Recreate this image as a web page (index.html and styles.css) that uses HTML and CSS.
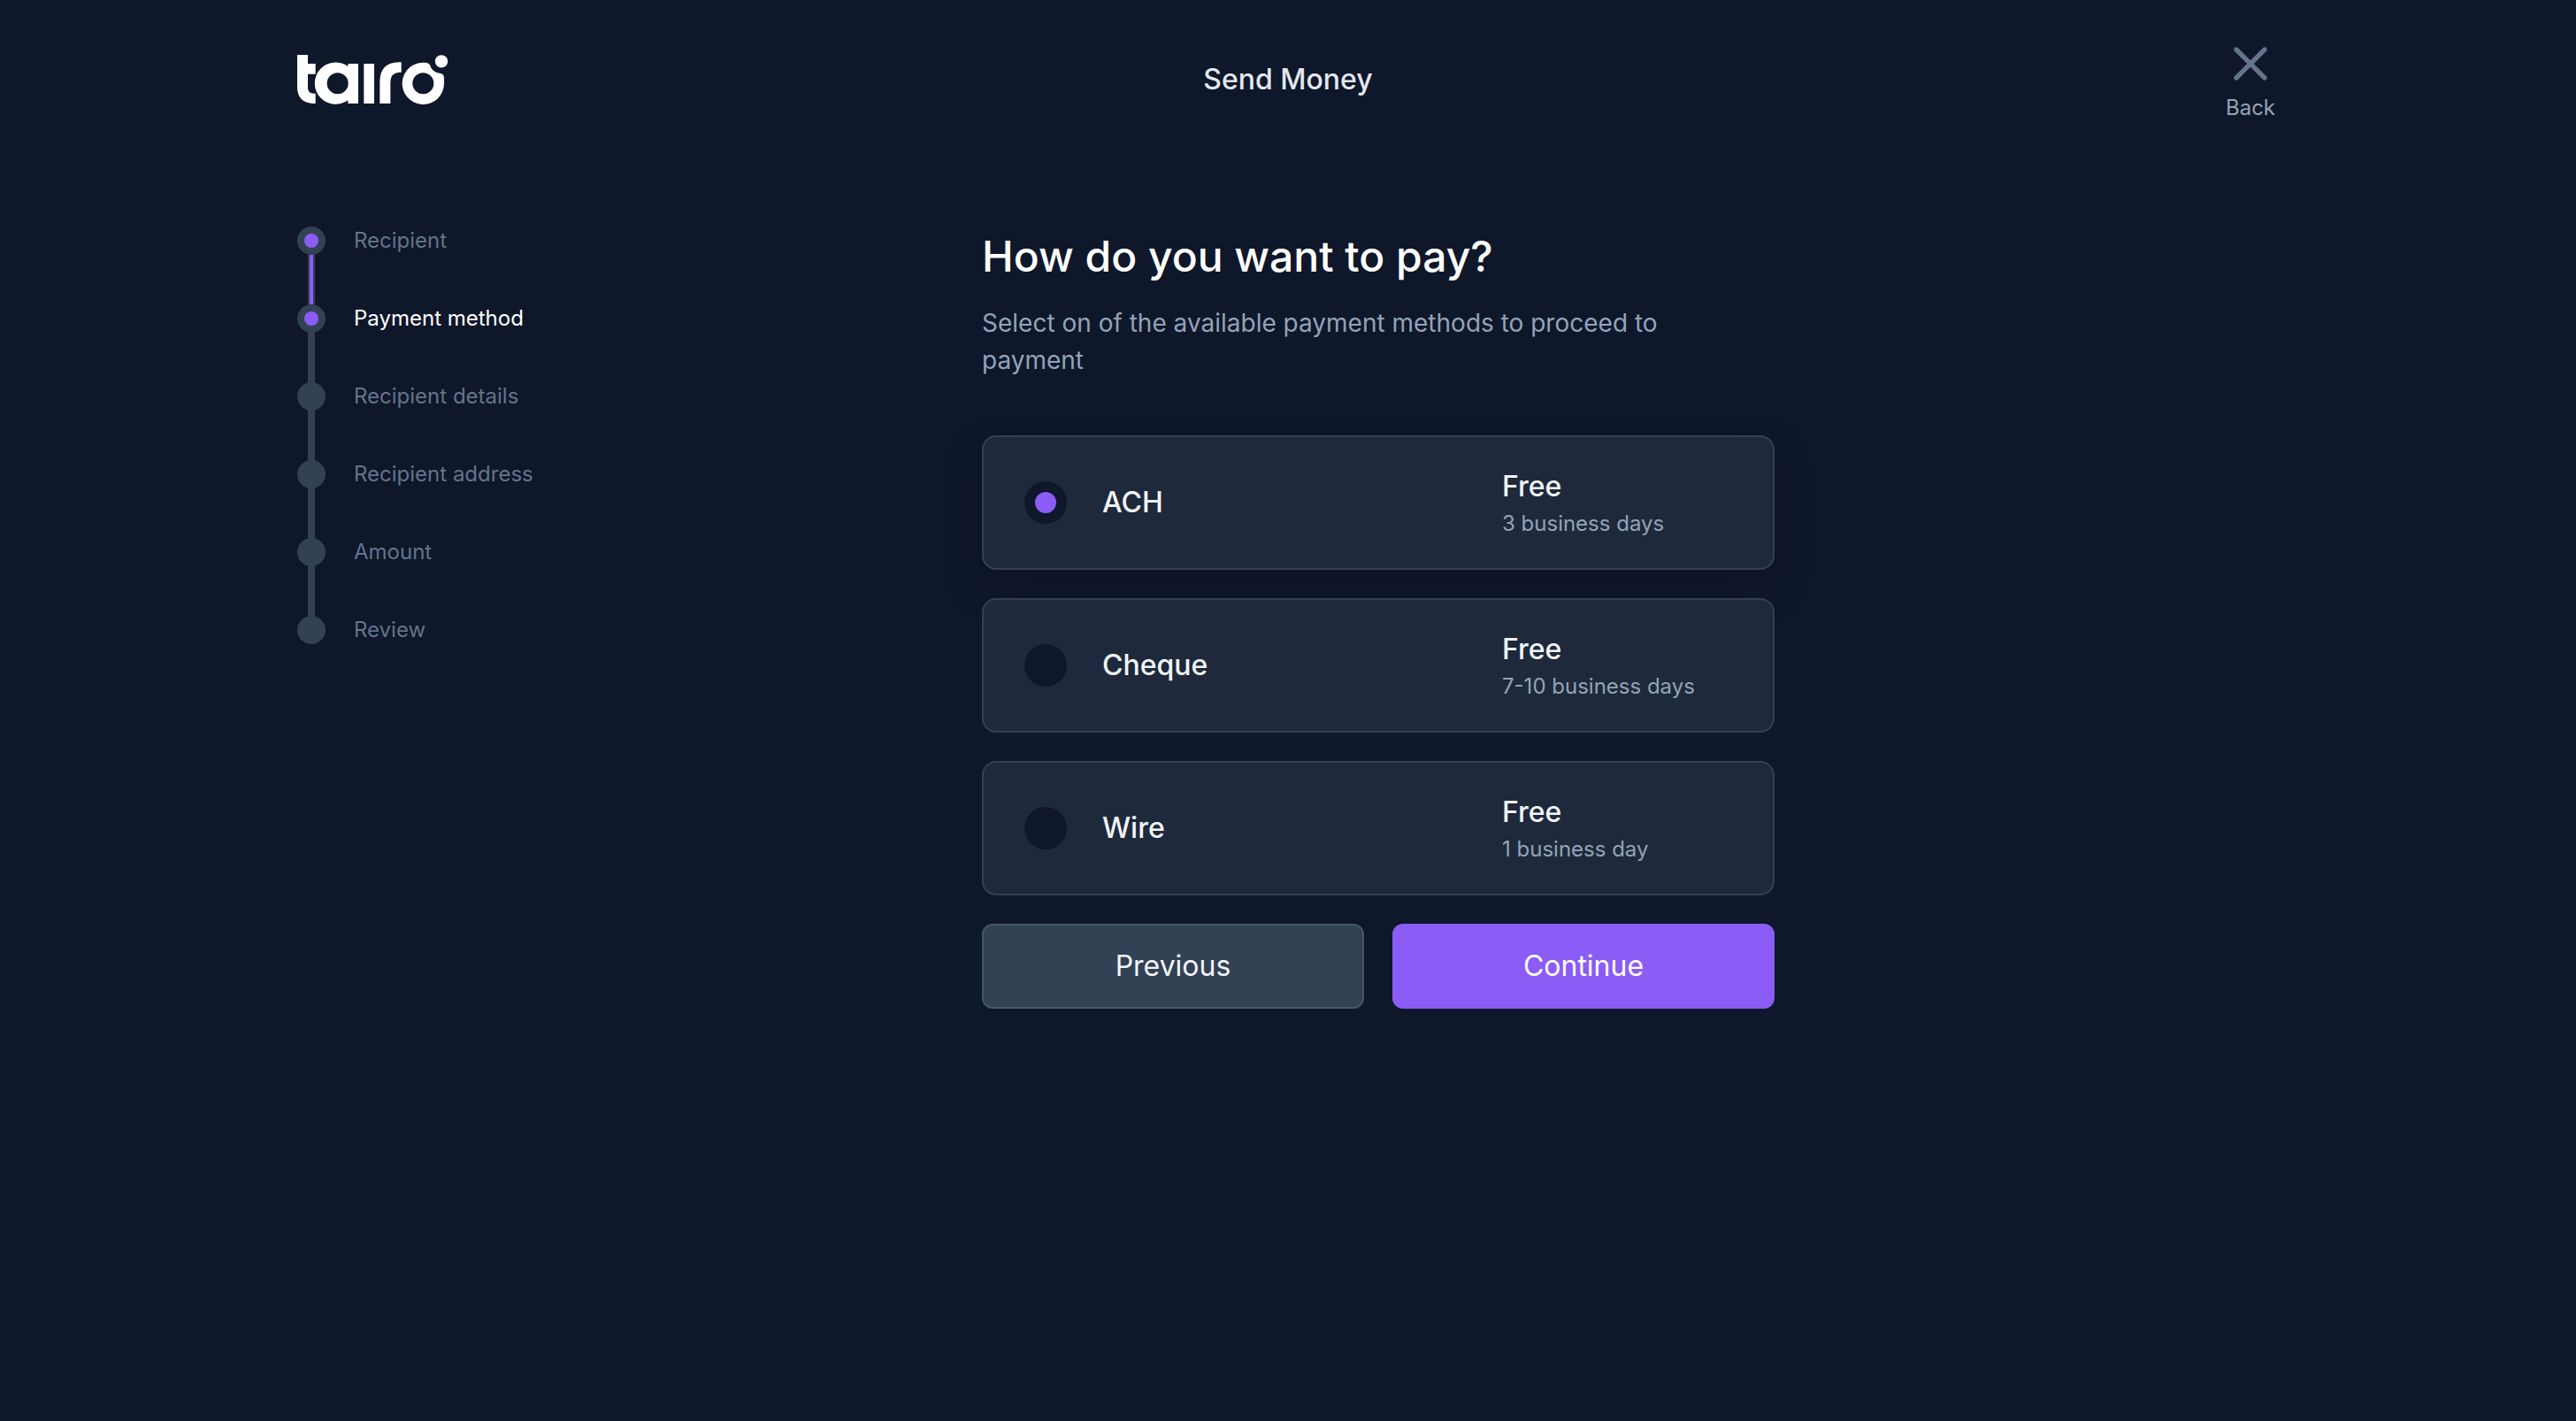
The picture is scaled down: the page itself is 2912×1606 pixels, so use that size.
FILE: index.html
```html
<!DOCTYPE html>
<html lang="en">
<head>
<meta charset="utf-8">
<meta name="viewport" content="width=device-width, initial-scale=1">
<title>Send Money</title>
<link rel="stylesheet" href="styles.css">
</head>
<body>
<div class="container">
  <header class="header">
    <a class="brand" href="#" aria-label="tairo">
      <svg class="logo" viewBox="48 66 510 168" fill="currentColor" aria-hidden="true">
        <path d="M48 66H84V96H110V131H84V178Q84 197 104 197H110V231H103Q48 229 48 175Z"/>
        <path fill-rule="evenodd" d="M220 231V220A71 71 0 1 1 220 105V96H255V231ZM185 127A36 36 0 1 0 185 199A36 36 0 1 0 185 127Z"/>
        <path d="M274 96H309V231H274Z"/>
        <path d="M328 231V158Q328 92 393 91H401V125H394Q364 127 364 158V231Z"/>
        <path fill-rule="evenodd" d="M483 92.500A71 71 0 1 0 546 163V150C546 138 544 130 534 129C516 128 502 115 499 103Q497 94 483 92.500ZM475 127A36 36 0 1 0 475 199A36 36 0 1 0 475 127Z"/>
        <circle cx="537" cy="88" r="21.500"/>
      </svg>
    </a>
    <p class="page-title">Send Money</p>
    <a class="back" href="#">
      <svg class="back-icon" viewBox="0 0 24 24" fill="none" stroke="currentColor" stroke-width="2" stroke-linecap="round" aria-hidden="true"><path d="M18 6 6 18M6 6l12 12"/></svg>
      <span>Back</span>
    </a>
  </header>
  <div class="layout">
    <ol class="steps">
      <li class="step reached done"><span class="dot"></span>Recipient</li>
      <li class="step reached current" aria-current="step"><span class="dot"></span>Payment method</li>
      <li class="step"><span class="dot"></span>Recipient details</li>
      <li class="step"><span class="dot"></span>Recipient address</li>
      <li class="step"><span class="dot"></span>Amount</li>
      <li class="step"><span class="dot"></span>Review</li>
    </ol>
    <main class="main">
      <form class="form">
        <h1 class="heading">How do you want to pay?</h1>
        <p class="intro">Select on of the available payment methods to proceed to payment</p>
        <div class="options">
          <label class="option">
            <input class="radio" type="radio" name="method" value="ach" checked>
            <span class="name">ACH</span>
            <span class="terms"><span class="price">Free</span><span class="delay">3 business days</span></span>
          </label>
          <label class="option">
            <input class="radio" type="radio" name="method" value="cheque">
            <span class="name">Cheque</span>
            <span class="terms"><span class="price">Free</span><span class="delay">7-10 business days</span></span>
          </label>
          <label class="option">
            <input class="radio" type="radio" name="method" value="wire">
            <span class="name">Wire</span>
            <span class="terms"><span class="price">Free</span><span class="delay">1 business day</span></span>
          </label>
        </div>
        <div class="actions">
          <button class="button" type="button">Previous</button>
          <button class="button primary" type="submit">Continue</button>
        </div>
      </form>
    </main>
  </div>
</div>
</body>
</html>
```
FILE: styles.css
```css
*, *::before, *::after { box-sizing: border-box; }

body {
  margin: 0;
  min-height: 100vh;
  background: #0f172a;
  color: #f1f5f9;
  font-family: Inter, "Liberation Sans", sans-serif;
  font-size: 24px;
  line-height: 32px;
}

a { color: inherit; text-decoration: none; }
h1, p, ol { margin: 0; padding: 0; }

.container {
  max-width: 2304px;
  margin: 0 auto;
  padding: 0 32px;
}

.header {
  display: grid;
  grid-template-columns: 1fr auto 1fr;
  align-items: center;
  padding: 40px 0;
}
.brand { justify-self: start; display: flex; color: #fff; }
.logo { width: 170px; height: 56px; }
.page-title { font-size: 32px; font-weight: 500; line-height: 40px; color: #e2e8f0; }
.back {
  justify-self: end;
  display: flex;
  flex-direction: column;
  align-items: center;
  line-height: 36px;
  color: #94a3b8;
}
.back-icon { width: 64px; height: 64px; color: #64748b; }

.layout {
  display: flex;
  flex-wrap: wrap;
  gap: 64px 0;
  padding: 76px 0;
}

.steps { width: 268px; list-style: none; }
.step {
  position: relative;
  display: flex;
  gap: 32px;
  padding-bottom: 56px;
  color: #64748b;
}
.step:last-child { padding-bottom: 0; }
.dot {
  display: grid;
  place-items: center;
  width: 32px;
  height: 32px;
  border-radius: 50%;
  background: #334155;
}
.reached .dot::before {
  content: "";
  width: 16px;
  height: 16px;
  border-radius: 50%;
  background: #8b5cf6;
}
.step:not(:last-child)::after {
  content: "";
  position: absolute;
  left: 12px;
  top: 31px;
  bottom: -1px;
  width: 8px;
  background: #334155;
}
.step.done::after {
  top: 32px;
  bottom: 0;
  border: solid #334155;
  border-width: 0 2px;
  background: #8b5cf6;
}
.current { color: #fff; }

.main {
  flex: 1;
  display: flex;
  justify-content: center;
  padding-right: 64px;
}
.form { width: 100%; max-width: 896px; }
.heading {
  margin-bottom: 20px;
  font-size: 48px;
  font-weight: 500;
  line-height: 68px;
  color: #fff;
}
.intro {
  max-width: 800px;
  margin-bottom: 64px;
  font-size: 28px;
  line-height: 42px;
  color: #94a3b8;
}

.options { display: grid; gap: 32px; }
.option {
  display: grid;
  grid-template-columns: 48px 1fr 260px;
  column-gap: 40px;
  align-items: center;
  min-height: 152px;
  padding: 32px 46px;
  border: 2px solid #334155;
  border-radius: 16px;
  background: #1e293b;
}
.option:has(:checked) { box-shadow: 0 20px 40px -6px #0d1426; }
.radio {
  appearance: none;
  display: grid;
  place-items: center;
  width: 48px;
  height: 48px;
  margin: 0;
  border-radius: 50%;
  background: #0f172a;
}
.radio:checked::before {
  content: "";
  width: 24px;
  height: 24px;
  border-radius: 50%;
  background: #8b5cf6;
}
.name, .price { font-size: 32px; font-weight: 500; line-height: 40px; }
.terms { display: grid; gap: 6px; padding-top: 2px; }
.delay { color: #94a3b8; }

.actions {
  display: grid;
  grid-template-columns: 1fr 1fr;
  gap: 32px;
  margin-top: 32px;
}
.button {
  height: 96px;
  border: 2px solid #475569;
  border-radius: 12px;
  background: #334155;
  color: #f1f5f9;
  font: inherit;
  font-size: 32px;
}
.primary { border-color: #8b5cf6; background: #8b5cf6; color: #fff; }
```
